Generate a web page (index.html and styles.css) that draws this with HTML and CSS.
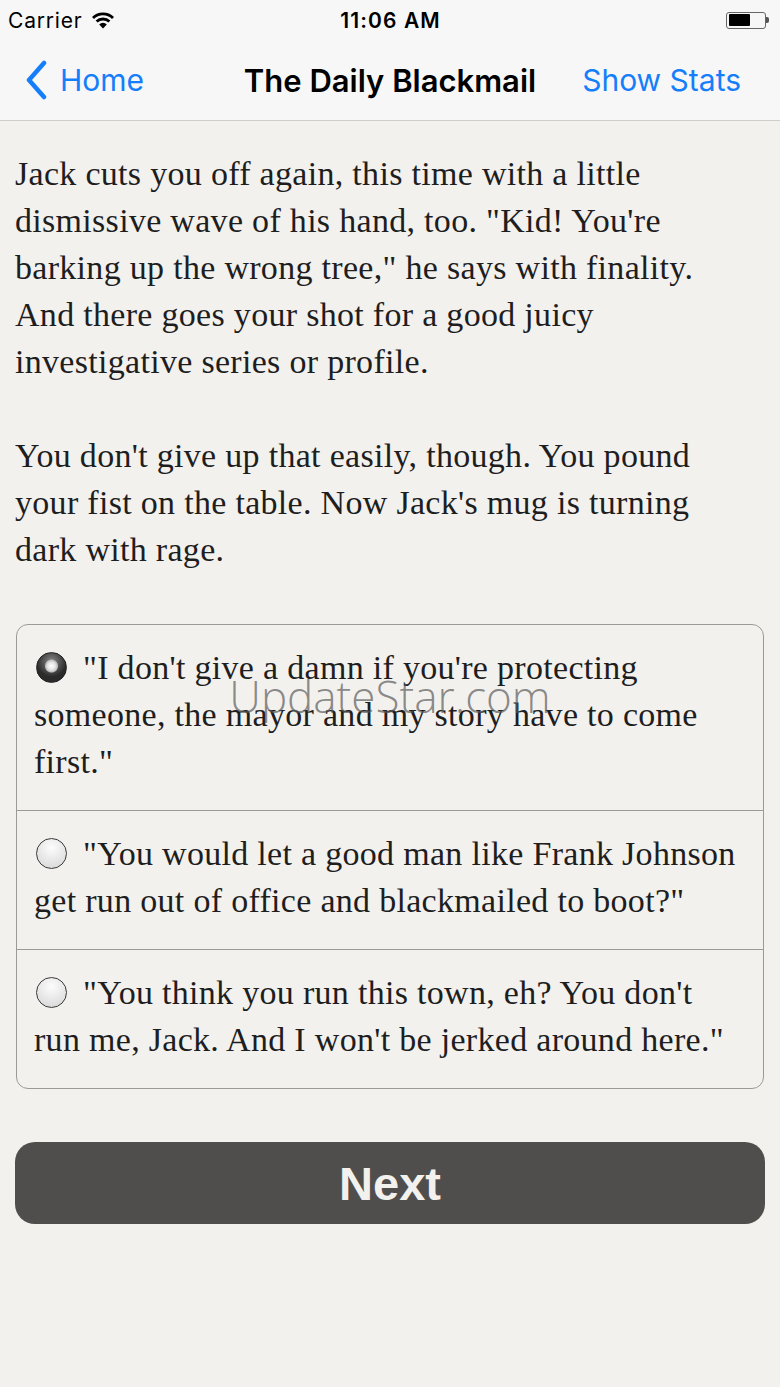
FILE: index.html
```html
<!DOCTYPE html>
<html lang="en">
<head>
<meta charset="UTF-8">
<meta name="viewport" content="width=device-width, initial-scale=1.0">
<title>The Daily Blackmail</title>
<link rel="stylesheet" href="styles.css">
</head>
<body>
<div id="app">
    <!-- Status bar -->
    <div class="status-bar">
        <div class="carrier">
            Carrier
            <svg class="wifi" width="24" height="18" viewBox="0 0 24 18">
                <path d="M12 17.5 L8.2 13.4 A5.4 5.4 0 0 1 15.8 13.4 Z" fill="#000"/>
                <path d="M4.6 9.6 A10.6 10.6 0 0 1 19.4 9.6 L17.4 11.6 A7.8 7.8 0 0 0 6.6 11.6 Z" fill="#000"/>
                <path d="M1 5.9 A15.8 15.8 0 0 1 23 5.9 L21 7.9 A13 13 0 0 0 3 7.9 Z" fill="#000"/>
            </svg>
        </div>
        <div class="clock">11:06 AM</div>
        <div class="battery">
            <span class="battery-body"><span class="battery-level"></span></span>
            <span class="battery-tip"></span>
        </div>
    </div>

    <!-- Navigation bar -->
    <header class="nav-bar">
        <a class="nav-back" href="#">
            <svg width="24" height="40" viewBox="0 0 24 40">
                <path d="M20 3 L5 20 L20 37" fill="none" stroke="#157efb" stroke-width="4.5" stroke-linecap="round" stroke-linejoin="round"/>
            </svg>
            Home
        </a>
        <h1 class="nav-title">The Daily Blackmail</h1>
        <a class="nav-action" href="#">Show Stats</a>
    </header>

    <!-- Story -->
    <main class="story">
        <p class="passage">Jack cuts you off again, this time with a little dismissive wave of his hand, too. "Kid! You're barking up the wrong tree," he says with finality. And there goes your shot for a good juicy investigative series or profile.</p>
        <p class="passage">You don't give up that easily, though. You pound your fist on the table. Now Jack's mug is turning dark with rage.</p>

        <ul class="choices">
            <li class="choice selected"><span class="radio"></span>"I don't give a damn if you're protecting someone, the mayor and my story have to come first."</li>
            <li class="choice"><span class="radio"></span>"You would let a good man like Frank Johnson get run out of office and blackmailed to boot?"</li>
            <li class="choice"><span class="radio"></span>"You think you run this town, eh? You don't run me, Jack. And I won't be jerked around here."</li>
        </ul>

        <button class="next-btn" type="button">Next</button>
    </main>

    <div class="watermark">UpdateStar.com</div>
</div>
</body>
</html>
```
FILE: styles.css
```css
/* Page */
body {
    margin: 0;
    background-color: #f3f1ee;
    color: #1e1e1e;
    font-family: "Liberation Serif", serif;
}
#app {
    position: relative;
    min-height: 1387px;
}

/* Status bar */
.status-bar {
    display: grid;
    grid-template-columns: 1fr auto 1fr;
    align-items: center;
    height: 40px;
    padding: 0 11px 0 8px;
    background-color: #f7f7f7;
    font-family: "Inter", "Liberation Sans", sans-serif;
    font-size: 21px;
    letter-spacing: 0.8px;
    color: #000;
}
.carrier {
    display: flex;
    align-items: center;
    gap: 9px;
}
.clock {
    font-weight: 600;
    letter-spacing: 1.1px;
    padding-left: 4px;
}
.battery {
    display: flex;
    align-items: center;
    justify-content: flex-end;
}
.battery-body {
    display: block;
    width: 40px;
    height: 17px;
    border: 1.5px solid #666;
    border-radius: 3px;
    padding: 1.5px;
    box-sizing: border-box;
}
.battery-level {
    display: block;
    width: 60%;
    height: 100%;
    background-color: #000;
    border-radius: 1px;
}
.battery-tip {
    width: 3px;
    height: 6px;
    background-color: #555;
    border-radius: 0 2px 2px 0;
}

/* Navigation bar */
.nav-bar {
    display: grid;
    grid-template-columns: 1fr auto 1fr;
    align-items: center;
    height: 80px;
    padding: 0 39px;
    background-color: #f7f7f7;
    border-bottom: 1px solid #cfcdca;
    font-family: "Inter", "Liberation Sans", sans-serif;
    font-size: 30px;
}
.nav-bar a {
    color: #157efb;
    text-decoration: none;
}
.nav-back {
    display: flex;
    align-items: center;
    gap: 12px;
    margin-left: -15px;
}
.nav-title {
    margin: 0;
    font-size: 31px;
    font-weight: 600;
    color: #000;
}
.nav-action {
    justify-self: end;
}

/* Story text */
.story {
    padding: 29px 15px 0;
}
.passage {
    margin: 0 0 47px;
    font-size: 34px;
    letter-spacing: 0.3px;
    line-height: 47px;
    padding-right: 20px;
}

/* Choices */
.choices {
    list-style: none;
    margin: 51px 1px 0;
    padding: 0;
    border: 1.5px solid #9c9a98;
    border-radius: 12px;
}
.choice {
    padding: 19px 20px 25px 17px;
    font-size: 34px;
    letter-spacing: 0.3px;
    line-height: 47px;
}
.choice + .choice {
    border-top: 1.5px solid #9c9a98;
}
.radio {
    display: inline-block;
    width: 31px;
    height: 31px;
    margin: 0 16px 0 2px;
    border: 1.5px solid #3a3a3a;
    border-radius: 50%;
    vertical-align: -4px;
    box-sizing: border-box;
    background: radial-gradient(circle at 50% 30%, #fcfcfc, #d4d4d4);
}
.choice.selected .radio {
    border: 1px solid #222;
    background:
        radial-gradient(circle at 50% 45%, #fff 0, #e2e2e2 4px, #bbb 6px, transparent 7px),
        radial-gradient(circle at 50% 30%, #8a8a8a, #2a2a2a 15px);
}

/* Next button */
.next-btn {
    display: block;
    width: 100%;
    height: 82px;
    margin-top: 53px;
    border: none;
    border-radius: 20px;
    background-color: #4f4e4c;
    color: #f3f1ee;
    font-family: "Liberation Sans", sans-serif;
    font-size: 47px;
    font-weight: bold;
    cursor: pointer;
}

/* Watermark */
.watermark {
    position: absolute;
    top: 666px;
    left: 0;
    right: 0;
    text-align: center;
    font-family: "Open Sans", "Liberation Sans", sans-serif;
    font-size: 44px;
    font-weight: 300;
    color: rgba(90, 90, 90, 0.7);
    pointer-events: none;
}
```
